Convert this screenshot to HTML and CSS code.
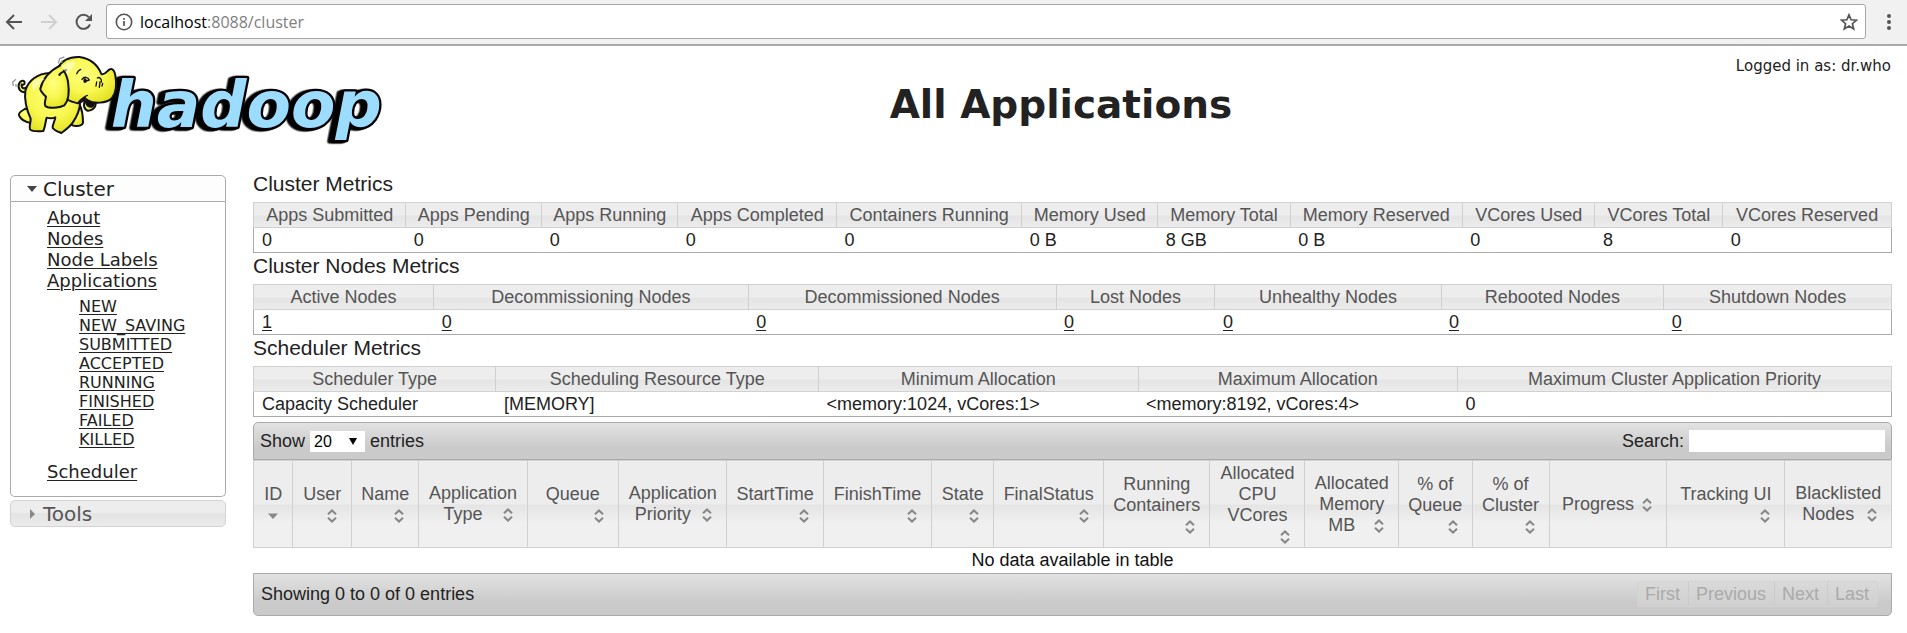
FILE: index.html
```html
<!DOCTYPE html>
<html lang="en">
<head>
<meta charset="utf-8">
<title>All Applications</title>
<link rel="stylesheet" href="styles.css">
</head>
<body>
<div class="browser">
  <button class="nav" aria-label="Back"><svg width="18" height="18" viewBox="0 0 18 18"><path d="M17 9H2M9 2L2 9l7 7" fill="none" stroke="#555" stroke-width="2"/></svg></button>
  <button class="nav" aria-label="Forward" disabled><svg width="18" height="18" viewBox="0 0 18 18"><path d="M1 9h15M9 2l7 7-7 7" fill="none" stroke="#d0d0d0" stroke-width="2"/></svg></button>
  <button class="nav" aria-label="Reload"><svg width="18" height="18" viewBox="0 0 18 18"><path d="M15 11.500A7 7 0 1 1 13.800 4.200" fill="none" stroke="#555" stroke-width="2"/><path d="M17 1v7h-7z" fill="#555"/></svg></button>
  <div class="address">
    <svg width="18" height="18" viewBox="0 0 18 18"><circle cx="9" cy="9" r="7.700" fill="none" stroke="#555" stroke-width="1.600"/><path d="M9 8v5M9 5v1.700" stroke="#555" stroke-width="1.700"/></svg>
    <div class="url"><span>localhost</span>:8088/cluster</div>
    <button class="nav" aria-label="Bookmark"><svg width="18" height="18" viewBox="0 0 18 18"><path d="M9 1.800l2.100 5 5.400.4-4.100 3.500 1.300 5.300L9 13.100 4.300 16l1.300-5.300L1.500 7.200l5.400-.4z" fill="none" stroke="#555" stroke-width="1.700"/></svg></button>
  </div>
  <button class="nav menu" aria-label="Menu"><svg width="6" height="18" viewBox="0 0 6 18"><g fill="#555"><circle cx="3" cy="3" r="2"/><circle cx="3" cy="9" r="2"/><circle cx="3" cy="15" r="2"/></g></svg></button>
</div>

<header class="banner">
  <svg class="logo" viewBox="30 156 1128 282" role="img" aria-label="hadoop">
    <defs>
      <radialGradient id="skin" cx="0.45" cy="0.4" r="0.65"><stop offset="0" stop-color="#ffff80"/><stop offset="0.55" stop-color="#f8f850"/><stop offset="1" stop-color="#e2e020"/></radialGradient>
    </defs>
    <text class="word" x="332" y="380">hadoop</text>
    <g fill="url(#skin)" stroke="#111" stroke-width="6" stroke-linejoin="round" stroke-linecap="round">
      <path d="M78 276C62 280 52 266 57 251C62 240 73 240 74 248C75 254 68 256 65 253C63 262 70 269 80 262"/>
      <path d="M76 326C66 332 54 338 57 346C62 358 76 366 92 369L100 330Z"/>
      <path d="M238 312C246 328 249 348 249 368C246 380 220 380 214 374L206 330Z"/>
      <path d="M150 219C112 220 84 242 76 272C72 305 80 330 92 356C93 368 86 380 90 388C98 396 120 394 130 393C136 380 136 366 140 353C150 356 158 356 166 352C164 366 156 376 158 384C164 392 176 396 184 399C194 392 208 382 218 368C230 350 240 332 240 308L252 300L236 225Z"/>
      <path d="M254 303C250 314 252 326 262 332C276 333 287 324 288 308Z"/>
      <path d="M258 308C260 318 268 322 276 320C281 316 283 310 282 306Z" fill="#111"/>
      <path d="M174 204C184 184 206 170 238 171C268 175 292 192 304 222C316 228 322 208 332 207C340 206 344 216 346 226C351 254 350 276 336 294C320 311 280 312 262 300C258 298 256 296 253 292C244 298 238 304 234 310C225 308 214 306 204 300Z"/>
      <path d="M180 197C150 212 128 238 121 266C120 274 130 282 138 290C136 302 132 312 136 318C146 327 178 324 193 316C206 302 208 272 204 245C202 232 196 220 192 212"/>
      <path d="M178 225C182 216 194 214 198 210" fill="none"/>
      <path d="M230 221C233 214 237 210 242 208M262 286C256 288 252 292 254 300" fill="none" stroke-width="4"/>
      <path d="M246 238C252 229 264 230 268 240L258 243M292 234C298 230 306 236 304 246M290 246L288 258M300 246L298 262M308 250L306 258" fill="none" stroke-width="4"/>
      <ellipse cx="255" cy="242" rx="5" ry="7" fill="#111" stroke="none"/>
    </g>
    <path d="M175 190l4-14 14-5M184 188l3-7M40 258l-2-12 10-8M48 260v-8" fill="none" stroke="#999" stroke-width="4"/>
    <path d="M184 200C210 178 232 184 226 192C212 212 206 220 204 226M94 250C108 234 128 230 134 238C118 250 110 262 100 274Z" fill="#fff" opacity="0.5"/>
  </svg>
  <h1>All Applications</h1>
  <div class="user">Logged in as: dr.who</div>
</header>

<div class="layout">
  <nav class="sidebar">
    <button class="fold open"><svg width="10" height="10" viewBox="0 0 10 10"><path d="M0 2h10L5 8z" fill="#454545"/></svg>Cluster</button>
    <div class="panel">
      <ul class="links">
        <li><a href="#">About</a></li>
        <li><a href="#">Nodes</a></li>
        <li><a href="#">Node Labels</a></li>
        <li><a href="#">Applications</a>
          <ul class="states">
            <li><a href="#">NEW</a></li>
            <li><a href="#">NEW_SAVING</a></li>
            <li><a href="#">SUBMITTED</a></li>
            <li><a href="#">ACCEPTED</a></li>
            <li><a href="#">RUNNING</a></li>
            <li><a href="#">FINISHED</a></li>
            <li><a href="#">FAILED</a></li>
            <li><a href="#">KILLED</a></li>
          </ul>
        </li>
        <li><a href="#">Scheduler</a></li>
      </ul>
    </div>
    <button class="fold"><svg width="10" height="10" viewBox="0 0 10 10"><path d="M3 0v10l5-5z" fill="#888"/></svg>Tools</button>
  </nav>

  <main>
    <h2>Cluster Metrics</h2>
    <table class="metrics">
      <colgroup><col class="w93"><col class="w83"><col class="w83"><col class="w97"><col class="w113"><col class="w83"><col class="w81"><col class="w105"><col class="w81"><col class="w78"><col></colgroup>
      <thead><tr><th>Apps Submitted</th><th>Apps Pending</th><th>Apps Running</th><th>Apps Completed</th><th>Containers Running</th><th>Memory Used</th><th>Memory Total</th><th>Memory Reserved</th><th>VCores Used</th><th>VCores Total</th><th>VCores Reserved</th></tr></thead>
      <tbody><tr><td>0</td><td>0</td><td>0</td><td>0</td><td>0</td><td>0 B</td><td>8 GB</td><td>0 B</td><td>0</td><td>8</td><td>0</td></tr></tbody>
    </table>
    <h2>Cluster Nodes Metrics</h2>
    <table class="metrics">
      <colgroup><col class="w110"><col class="w192"><col class="w188"><col class="w97"><col class="w138"><col class="w136"><col></colgroup>
      <thead><tr><th>Active Nodes</th><th>Decommissioning Nodes</th><th>Decommissioned Nodes</th><th>Lost Nodes</th><th>Unhealthy Nodes</th><th>Rebooted Nodes</th><th>Shutdown Nodes</th></tr></thead>
      <tbody><tr><td><a href="#">1</a></td><td><a href="#">0</a></td><td><a href="#">0</a></td><td><a href="#">0</a></td><td><a href="#">0</a></td><td><a href="#">0</a></td><td><a href="#">0</a></td></tr></tbody>
    </table>
    <h2>Scheduler Metrics</h2>
    <table class="metrics">
      <colgroup><col class="w148"><col class="w197"><col class="w195"><col class="w195"><col></colgroup>
      <thead><tr><th>Scheduler Type</th><th>Scheduling Resource Type</th><th>Minimum Allocation</th><th>Maximum Allocation</th><th>Maximum Cluster Application Priority</th></tr></thead>
      <tbody><tr><td>Capacity Scheduler</td><td>[MEMORY]</td><td>&lt;memory:1024, vCores:1&gt;</td><td>&lt;memory:8192, vCores:4&gt;</td><td>0</td></tr></tbody>
    </table>

    <div class="bar top">
      <label class="length">Show
        <span class="pick"><select><option>10</option><option selected>20</option><option>50</option><option>100</option></select></span>
        entries</label>
      <label class="search">Search: <input type="text"></label>
    </div>
    <table class="apps">
      <colgroup><col class="w24"><col class="w36"><col class="w41"><col class="w66"><col class="w56"><col class="w66"><col class="w59"><col class="w66"><col class="w38"><col class="w67"><col class="w65"><col class="w58"><col class="w57"><col class="w45"><col class="w47"><col class="w72"><col class="w72"><col></colgroup>
      <thead><tr>
        <th>ID<svg class="sort" viewBox="0 0 16 16"><path d="M3 5.500h10L8 11z" fill="#888"/></svg></th>
        <th>User<svg class="sort" viewBox="0 0 16 16"><use href="#both"/></svg></th>
        <th>Name<svg class="sort" viewBox="0 0 16 16"><use href="#both"/></svg></th>
        <th>Application Type<svg class="sort" viewBox="0 0 16 16"><use href="#both"/></svg></th>
        <th>Queue<svg class="sort" viewBox="0 0 16 16"><use href="#both"/></svg></th>
        <th>Application Priority<svg class="sort" viewBox="0 0 16 16"><use href="#both"/></svg></th>
        <th>StartTime<svg class="sort" viewBox="0 0 16 16"><use href="#both"/></svg></th>
        <th>FinishTime<svg class="sort" viewBox="0 0 16 16"><use href="#both"/></svg></th>
        <th>State<svg class="sort" viewBox="0 0 16 16"><use href="#both"/></svg></th>
        <th>FinalStatus<svg class="sort" viewBox="0 0 16 16"><use href="#both"/></svg></th>
        <th>Running Containers<svg class="sort" viewBox="0 0 16 16"><use href="#both"/></svg></th>
        <th>Allocated CPU VCores<svg class="sort" viewBox="0 0 16 16"><use href="#both"/></svg></th>
        <th>Allocated Memory MB<svg class="sort" viewBox="0 0 16 16"><use href="#both"/></svg></th>
        <th>% of Queue<svg class="sort" viewBox="0 0 16 16"><use href="#both"/></svg></th>
        <th>% of Cluster<svg class="sort" viewBox="0 0 16 16"><use href="#both"/></svg></th>
        <th>Progress<svg class="sort" viewBox="0 0 16 16"><use href="#both"/></svg></th>
        <th>Tracking UI<svg class="sort" viewBox="0 0 16 16"><use href="#both"/></svg></th>
        <th>Blacklisted Nodes<svg class="sort" viewBox="0 0 16 16"><defs><path id="both" d="M4 6.300L8 2.500l4 3.800M4 9.700l4 3.800 4-3.800" fill="none" stroke="#888" stroke-width="2"/></defs><use href="#both"/></svg></th>
      </tr></thead>
      <tbody><tr><td colspan="18">No data available in table</td></tr></tbody>
    </table>
    <div class="bar bottom">
      <div>Showing 0 to 0 of 0 entries</div>
      <div class="pager"><button disabled>First</button><button disabled>Previous</button><button disabled>Next</button><button disabled>Last</button></div>
    </div>
  </main>
</div>
</body>
</html>
```

FILE: styles.css
```css
* { box-sizing: border-box; }
body { margin: 0; background: #fff; color: #222; font: 18px/21px "Liberation Sans", Arial, sans-serif; }
button { font: inherit; color: inherit; }
a { color: inherit; text-underline-offset: 2px; text-decoration-thickness: 1px; }

/* Browser toolbar */
.browser { display: flex; align-items: center; padding: 4px 15px 5px 5px; background: #f1f1f1; border-bottom: 2px solid #a9a9a9; }
.nav { display: flex; padding: 0; border: 0; background: none; margin-right: 17px; }
.nav.menu { margin: 0 0 0 20px; }
.address { flex: 1; display: flex; align-items: center; gap: 7px; height: 35px; padding: 0 7px 0 8px; background: #fff; border: 1px solid #a5a5a5; border-radius: 3px; }
.browser > .nav:nth-child(3) { margin-right: 13px; }
.address .nav { margin: 0; }
.url { flex: 1; font: 16px/22px "Open Sans", sans-serif; color: #808080; }
.url span { color: #000; }

/* Page banner */
.banner { display: flex; align-items: center; padding: 6px 16px 25px 10px; font-family: "DejaVu Sans", Verdana, sans-serif; }
.logo { width: 376px; height: 94px; }
.word { font: italic bold 194px "DejaVu Sans", sans-serif; fill: #9cdcff; stroke: #000; stroke-width: 14px; stroke-linejoin: round; paint-order: stroke; filter: drop-shadow(-8px 2px 0 #000) drop-shadow(-8px 2px 0 #000); }
.banner h1 { flex: 1; margin: 12px 0 0; text-align: center; font-size: 39px; line-height: 48px; }
.user { align-self: flex-start; margin-top: 4px; font-size: 15px; line-height: 20px; }

.layout { display: grid; grid-template-columns: 216px minmax(0, 1fr); gap: 27px; padding: 0 15px 16px 10px; align-items: start; }

/* Sidebar */
.sidebar { margin-top: 4px; font-family: "DejaVu Sans", Verdana, sans-serif; }
.fold { display: flex; align-items: center; gap: 6px; width: 100%; height: 27px; padding: 1px 16px 0; border: 1px solid #d3d3d3; border-radius: 5px; background: linear-gradient(#ededed 50%, #e4e4e4 50%, #ebebeb); color: #555; font-size: 20px; }
.fold.open { border-color: #aaa; border-radius: 5px 5px 0 0; background: #fdfdfd; color: #212121; }
.panel { margin-bottom: 3px; padding: 5px 0 14px 36px; border: 1px solid #aaa; border-top: 0; border-radius: 0 0 5px 5px; }
.links, .states { margin: 0; padding: 0; list-style: none; }
.states { margin: 6px 0 12px; padding-left: 32px; font-size: 16px; line-height: 19px; }

/* Tables */
h2 { margin: 0 0 6px; font-size: 21px; line-height: 25px; font-weight: normal; }
table { width: 100%; table-layout: fixed; border-collapse: collapse; }
th { padding: 2px 9px; font-weight: normal; color: #555; border: 1px solid #d0d0d0; background: linear-gradient(#ededed 50%, #e4e4e4 50%, #f0f0f0 calc(50% + 18px)); }
td { padding: 2px 9px; }
.metrics { line-height: 20px; }
.metrics th { padding: 2px 0; white-space: nowrap; }
.metrics td { padding-left: 8px; }
.metrics tbody { border: 1px solid #aaa; }
.apps td { padding: 2px 0; text-align: center; color: #111; }
.sort { float: right; width: 16px; height: 16px; margin: 3px 2px 0; }

.w24 { width: 2.4%; } .w36 { width: 3.6%; } .w38 { width: 3.8%; } .w41 { width: 4.1%; }
.w45 { width: 4.5%; } .w47 { width: 4.7%; } .w56 { width: 5.6%; } .w57 { width: 5.7%; }
.w58 { width: 5.8%; } .w59 { width: 5.9%; } .w65 { width: 6.5%; } .w66 { width: 6.6%; }
.w67 { width: 6.7%; } .w72 { width: 7.2%; } .w78 { width: 7.8%; } .w81 { width: 8.1%; }
.w83 { width: 8.3%; } .w93 { width: 9.3%; } .w97 { width: 9.7%; } .w105 { width: 10.5%; }
.w110 { width: 11%; } .w113 { width: 11.3%; } .w136 { width: 13.6%; } .w138 { width: 13.8%; }
.w148 { width: 14.8%; } .w188 { width: 18.8%; } .w192 { width: 19.2%; } .w195 { width: 19.5%; }
.w197 { width: 19.7%; }

/* Bars above and below the applications table */
.bar { display: flex; justify-content: space-between; align-items: center; border: 1px solid #aaa; background: linear-gradient(#e2e2e2, #cacaca 70%); }
.bar.top { margin-top: 5px; padding: 7px 6px; border-radius: 5px 5px 0 0; }
.bar.bottom { padding: 7px 13px 8px 7px; border-radius: 0 0 5px 5px; }
.length, .search { display: flex; align-items: center; gap: 5px; }
.pick { position: relative; }
.pick::after { content: ""; position: absolute; right: 8px; top: 7px; border: 4px solid transparent; border-top: 7px solid #000; border-bottom: 0; pointer-events: none; }
select { display: block; width: 55px; height: 21px; padding: 0 4px; border: 0; border-radius: 0; appearance: none; background: #fff; color: #000; font: 16px/21px "Liberation Sans", Arial, sans-serif; }
input { width: 196px; height: 22px; padding: 0 2px; border: 0; background: #fff; font: inherit; }
.pager { display: flex; border: 1px solid #d3d3d3; border-radius: 4px; background: linear-gradient(#d9d9d9, #d0d0d0); }
.pager button { height: 24px; padding: 0 8px 0 7px; border: 0; background: none; color: #aaa; }
.pager button + button { border-left: 1px solid #cbcbcb; }
```
